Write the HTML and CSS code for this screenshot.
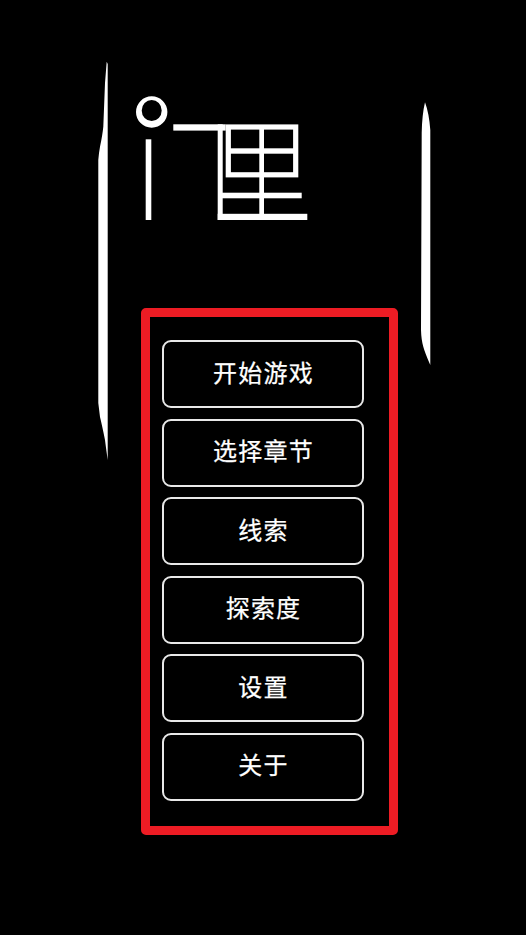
FILE: index.html
```html
<!DOCTYPE html>
<html lang="zh-CN">
<head>
<meta charset="utf-8">
<title>门里</title>
<link rel="stylesheet" href="styles.css">
</head>
<body>
<div class="page">
  <svg class="strokes" viewBox="0 0 526 935" aria-hidden="true">
    <path class="ink" d="M106.7 61.7 L107.7 64 L107.7 460 Q106 448 105 440 Q102 425 100 417 L98.3 403 L98.3 160 Q99 152 100 146.7 Q102.5 135 103.3 126.7 L105 83 Z"/>
    <path class="ink" d="M425 102.3 Q429 113 430.3 130 L430.3 365 Q425 353 423.3 346.7 Q421.3 340 421 330 L421.7 133 Q422 115 425 102.3 Z"/>
  </svg>
  <svg class="logo" viewBox="135 96 175 125" role="img" aria-label="门里">
    <path class="ink ring" d="M136 112 a15.7 15.7 0 1 0 31.4 0 a15.7 15.7 0 1 0 -31.4 0 Z M141.7 110.5 a10 10.5 0 1 1 20 0 a10 10.5 0 1 1 -20 0 Z"/>
    <rect class="ink" x="145.7" y="139.3" width="5.6" height="80.7"/>
    <rect class="ink" x="173.3" y="124.3" width="52.4" height="6.3"/>
    <rect class="ink" x="217.7" y="124.3" width="5" height="95.7"/>
    <rect class="ink" x="217.7" y="213.8" width="89.6" height="6.2"/>
    <rect class="ink" x="222" y="192.7" width="79.7" height="5.6"/>
    <rect class="frame" x="228.3" y="127" width="67.4" height="47.8"/>
    <rect class="ink" x="228" y="148.3" width="68" height="5.4"/>
    <rect class="ink" x="259.3" y="128" width="4.7" height="86"/>
  </svg>
  <nav class="menu">
    <button class="item">开始游戏</button>
    <button class="item">选择章节</button>
    <button class="item">线索</button>
    <button class="item">探索度</button>
    <button class="item">设置</button>
    <button class="item">关于</button>
  </nav>
</div>
</body>
</html>
```

FILE: styles.css
```css
html, body {
  margin: 0;
  background: #000;
}

.page {
  position: relative;
  width: 526px;
  height: 935px;
  overflow: hidden;
  padding-top: 96px;
  box-sizing: border-box;
}

.strokes {
  position: absolute;
  top: 0;
  left: 0;
  width: 526px;
  height: 935px;
}

.ink {
  fill: #fff;
}

.ring {
  fill-rule: evenodd;
}

.frame {
  fill: none;
  stroke: #fff;
  stroke-width: 5.2;
}

.logo {
  display: block;
  width: 175px;
  height: 125px;
  margin-left: 135px;
}

.menu {
  display: flex;
  flex-direction: column;
  gap: 10.6px;
  box-sizing: border-box;
  width: 257px;
  height: 527px;
  margin: 87px 0 0 141px;
  padding: 23px 25px 0 12px;
  border: 9px solid #ed1c24;
  border-radius: 5px;
}

.item {
  flex: none;
  height: 68px;
  padding: 0 0 6px 1px;
  box-sizing: border-box;
  background: #000;
  color: #fff;
  border: 2px solid #e8e8e8;
  border-radius: 9px;
  font-family: "Noto Sans CJK SC", sans-serif;
  font-size: 24px;
  -webkit-text-stroke: 0.25px #fff;
  letter-spacing: 1.2px;
  text-align: center;
}
```
